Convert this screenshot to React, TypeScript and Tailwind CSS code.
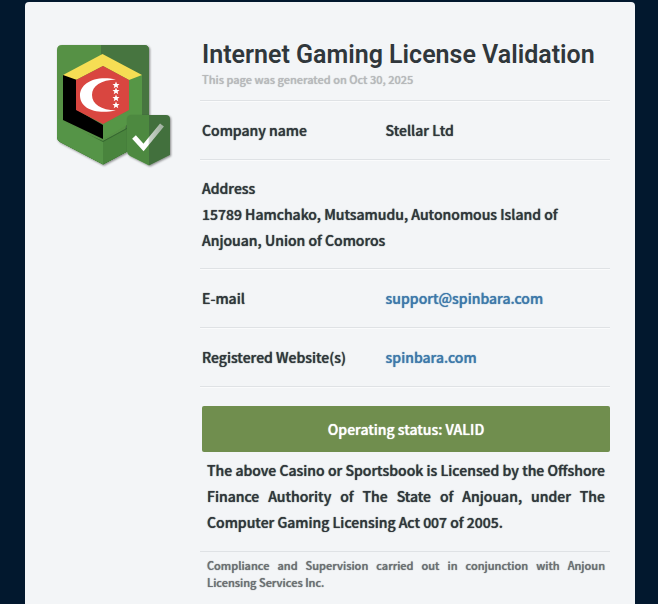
import type { ReactNode } from "react";

function Emblem() {
  return (
    <svg viewBox="45 35 135 140" className="block w-full" role="img" aria-label="Anjouan license seal">
      <defs>
        <filter id="shadow" x="-20%" y="-20%" width="140%" height="140%">
          <feDropShadow dx="1" dy="1" stdDeviation="1" floodColor="#000" floodOpacity="0.45" />
        </filter>
        <linearGradient id="tick" x1="0" x2="1">
          <stop offset="0.5" stopColor="#fff" />
          <stop offset="0.56" stopColor="#c9d2c9" />
          <stop offset="1" stopColor="#a3b3a3" />
        </linearGradient>
        <clipPath id="shield">
          <path d="M62 45H144Q149 45 149 50V140L103 164.500L60 142Q57 140 57 137V50Q57 45 62 45Z" />
        </clipPath>
        <clipPath id="badge">
          <path d="M131 115H166Q170 115 170 119V155L149 165.500L130 156Q127 154 127 151V119Q127 115 131 115Z" />
        </clipPath>
      </defs>
      <g filter="url(#shadow)">
        <g clipPath="url(#shield)">
          <path fill="#569144" d="M50 40H155V170H50Z" />
          <path fill="#467541" d="M101 40H155V170H103V141L125 129L142 75L101 55Z" />
          <path fill="#34672f" d="M57 121L103 141L127 128V152L103 165L57 142Z" />
          <path fill="#559446" d="M57 118L103 142V165L57 142Z" />
          <path fill="#4a843c" d="M103 142L127 129V152L103 165Z" />
        </g>
      </g>
      <path fill="#f6de54" d="M102.500 54L142 75V81L129 80L103 66L76 80L63 77V75Z" />
      <path fill="#000" d="M63 75L77 80V110L103 125V139L63 120Z" />
      <path fill="#569646" d="M142 75V116L103 139V124L129 110V80Z" />
      <path fill="#d94640" d="M103 66L129 80V110L103 124L76 110V80Z" />
      <path fill="#fff" d="M116 79.500C94 75 80 84 80 95.500C80 108 95 115 116 110.500C101 110 92 104 92 95C92 86 101 80 116 79.500Z" />
      {[85, 91, 98, 105].map((y) => (
        <path
          key={y}
          transform={`translate(116 ${y})`}
          fill="#fff"
          d="M0-3.500L1-1.100L3.500-1L1.600.700L2.300 3.200L0 1.800L-2.300 3.200L-1.600.700L-3.500-1L-1-1.100Z"
        />
      ))}
      <g filter="url(#shadow)">
        <g clipPath="url(#badge)">
          <path fill="#4e8940" d="M125 110H149V170H125Z" />
          <path fill="#436f3e" d="M149 110H175V170H149Z" />
        </g>
      </g>
      <path fill="none" stroke="url(#tick)" strokeWidth="5" d="M134 137L143.500 147.500L162 125" />
    </svg>
  );
}

function Row({ label, children }: { label: string; children: ReactNode }) {
  return (
    <div className="flex border-b border-[#dfe2e5] py-4 pl-0.5 shadow-[0_1px_0_#fafbfc]">
      <dt className="w-[45%] shrink-0">{label}</dt>
      <dd>{children}</dd>
    </div>
  );
}

export default function App() {
  return (
    <div className="min-h-screen bg-[#02182e] pt-0.5 pr-[23px] pl-[25px] font-['Noto_Sans_CJK_SC',sans-serif]">
      <main className="flex min-h-[602px] items-start rounded-t-sm bg-[#f3f5f7] pr-[25px] pb-3 pl-5 text-[14px] leading-[26px] font-medium text-[#30373b] [&_:is(p,dt,dd)]:[text-shadow:0_0_1px_currentColor]">
        <div className="mt-[33px] mr-5 w-[135px] shrink-0">
          <Emblem />
        </div>
        <div className="min-w-0 flex-1">
          <header className="border-b border-[#dfe2e5] pt-[38px] pb-3 pl-0.5 shadow-[0_1px_0_#fafbfc]">
            <h1 className="font-['Roboto',sans-serif] text-[25px] leading-[30px] font-semibold whitespace-nowrap">
              Internet Gaming License Validation
            </h1>
            <p className="text-[11px] leading-[18px] text-[#b7b9bb]">This page was generated on Oct 30, 2025</p>
          </header>
          <dl>
            <Row label="Company name">Stellar Ltd</Row>
            <div className="border-b border-[#dfe2e5] py-[15px] pl-0.5 shadow-[0_1px_0_#fafbfc]">
              <dt>Address</dt>
              <dd className="pr-10">15789 Hamchako, Mutsamudu, Autonomous Island of Anjouan, Union of Comoros</dd>
            </div>
            <Row label="E-mail">
              <a className="text-[#3e79aa] [text-shadow:0_0_1px_currentColor]" href="mailto:support@spinbara.com">
                support@spinbara.com
              </a>
            </Row>
            <Row label="Registered Website(s)">
              <a className="text-[#3e79aa] [text-shadow:0_0_1px_currentColor]" href="https://spinbara.com">
                spinbara.com
              </a>
            </Row>
          </dl>
          <p className="mt-[19px] ml-0.5 rounded-xs bg-[#708e4e] py-[10px] text-center text-white">
            Operating status: VALID
          </p>
          <p className="px-[5px] pt-[5px] pb-4 pl-[7px] text-justify">
            The above Casino or Sportsbook is Licensed by the Offshore Finance Authority of The State of Anjouan, under The
            Computer Gaming Licensing Act 007 of 2005.
          </p>
          <p className="border-t border-[#dfe2e5] px-[5px] pt-[5px] pl-[7px] text-justify text-[11px] leading-[17px] text-[#6b6f72]">
            Compliance and Supervision carried out in conjunction with Anjoun Licensing Services Inc.
          </p>
        </div>
      </main>
    </div>
  );
}
